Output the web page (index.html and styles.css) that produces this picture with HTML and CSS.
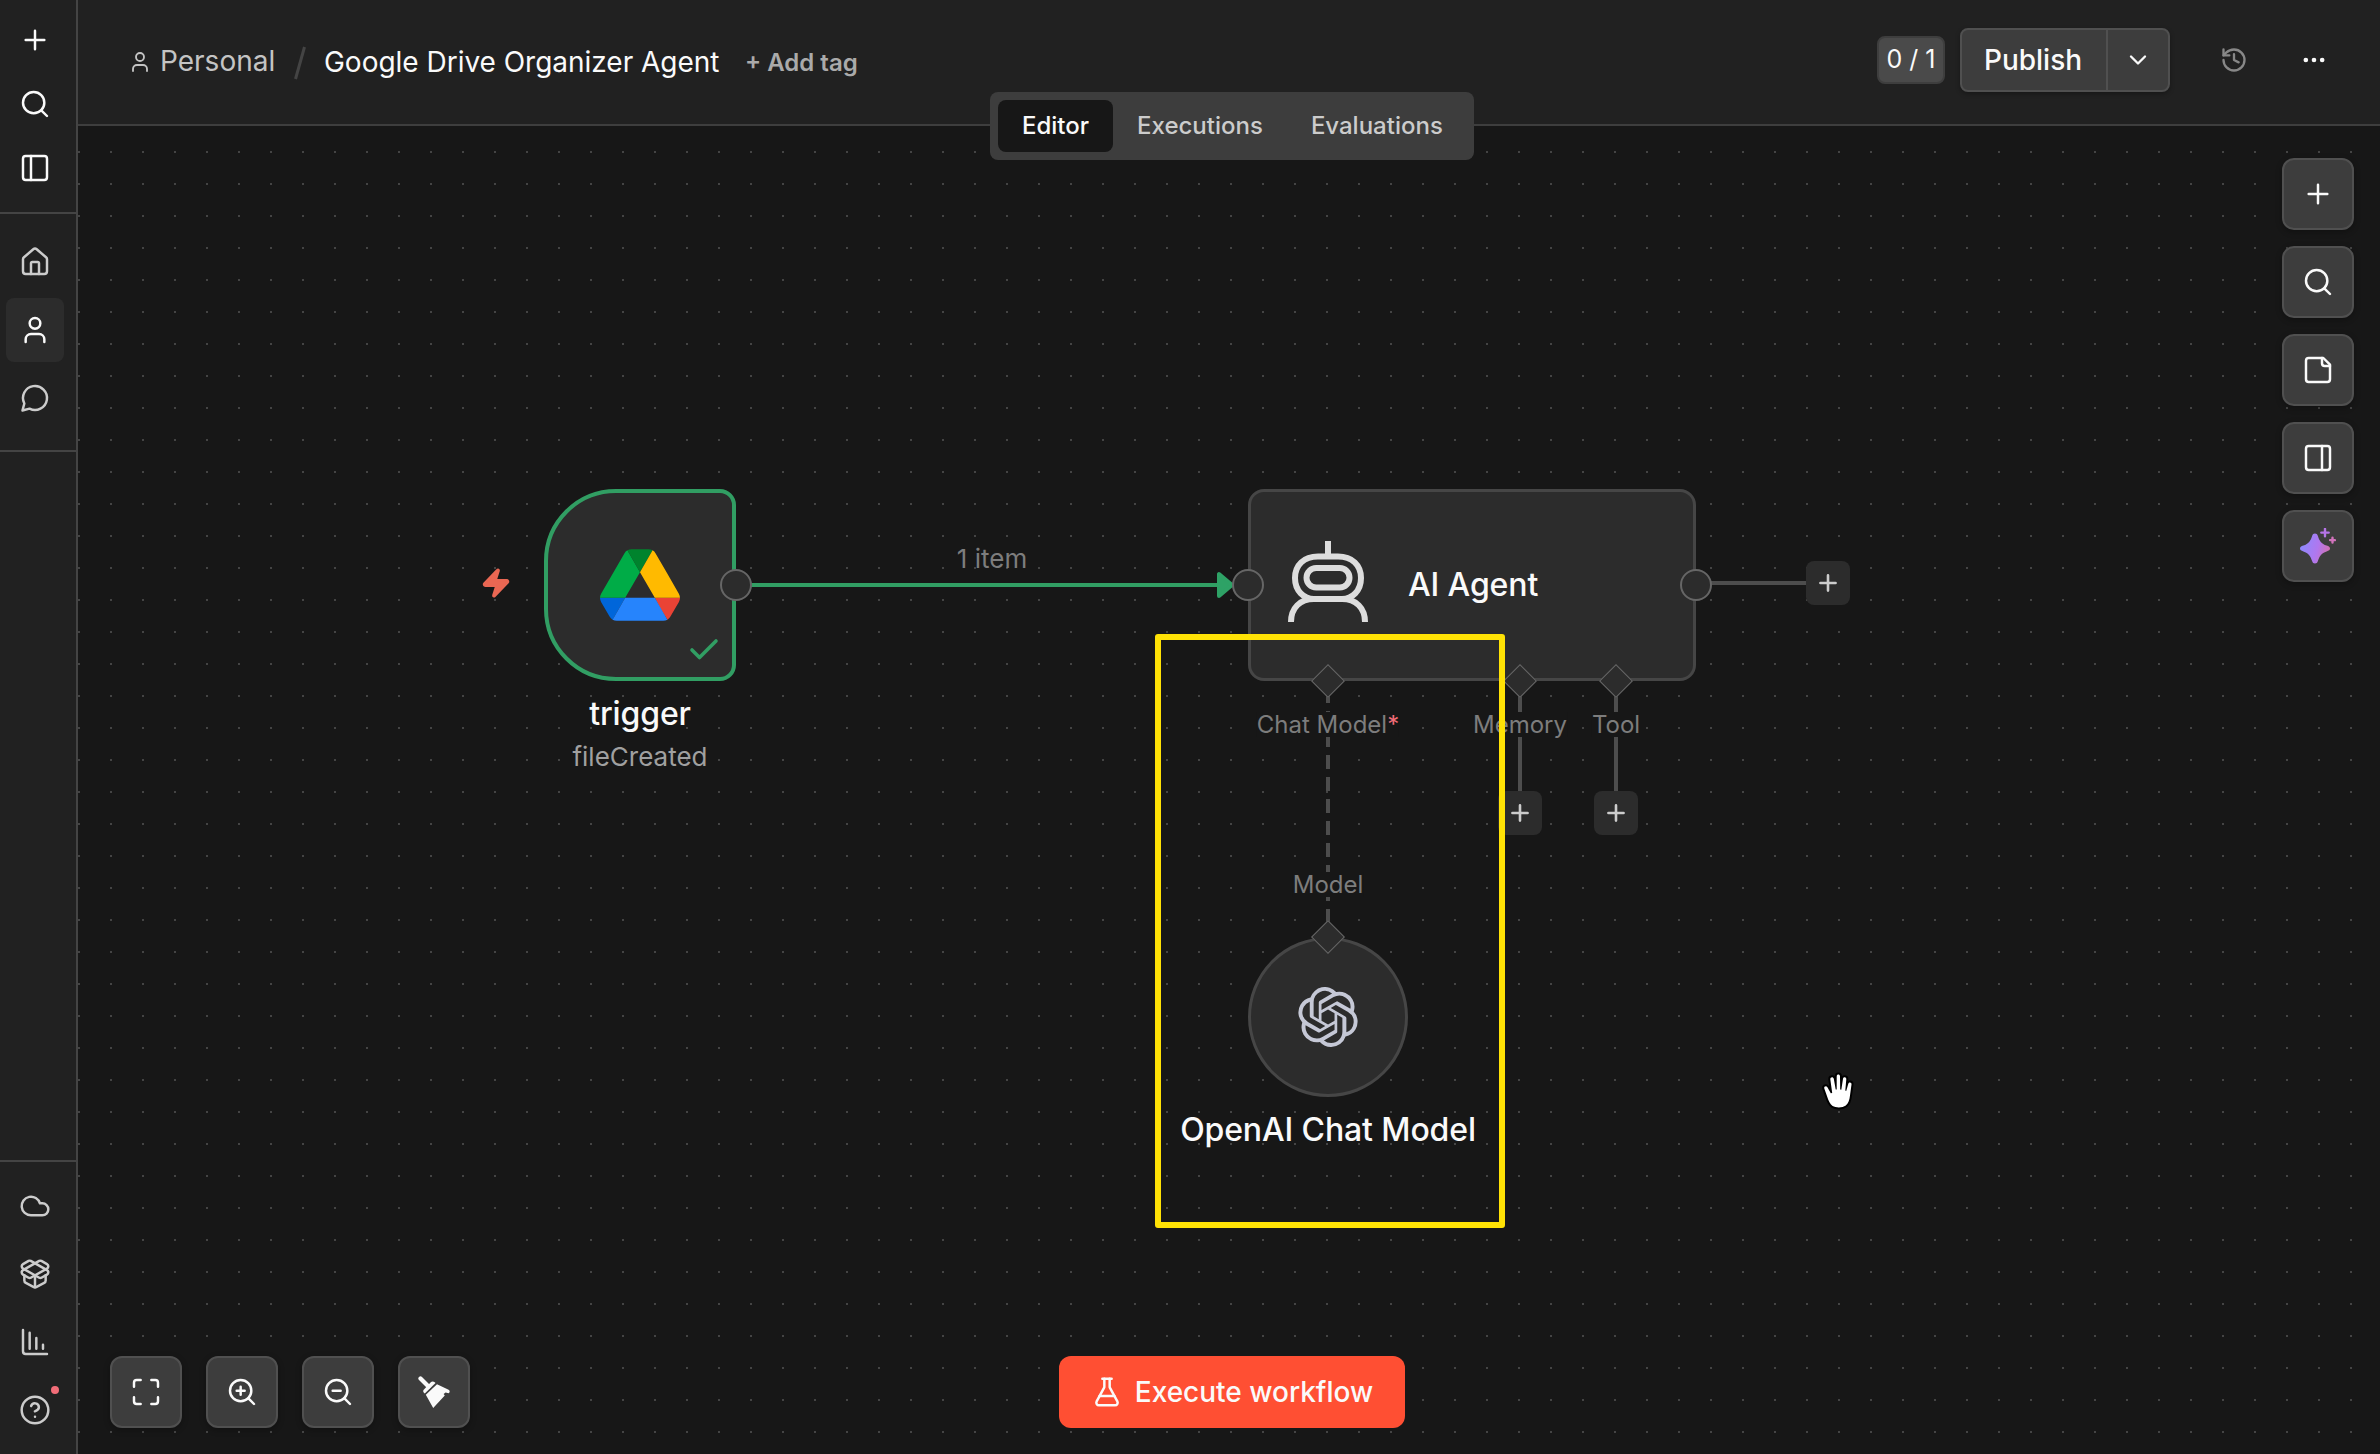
FILE: index.html
```html
<!DOCTYPE html>
<html lang="en">

<head>
    <meta charset="UTF-8">
    <meta name="viewport" content="width=device-width, initial-scale=1.0">
    <title>Google Drive Organizer Agent</title>
    <link rel="stylesheet" href="styles.css">
</head>

<body>
    <!-- Sidebar -->
    <aside class="sidebar">
        <div class="side-top">
            <a class="side-link"><svg class="icon" viewBox="0 0 24 24"><path d="M5 12h14M12 5v14"/></svg></a>
            <a class="side-link"><svg class="icon" viewBox="0 0 24 24"><circle cx="11" cy="11" r="8"/><path d="m21 21-4.3-4.3"/></svg></a>
            <a class="side-link"><svg class="icon" viewBox="0 0 24 24"><rect x="3" y="3" width="18" height="18" rx="2"/><path d="M9 3v18"/></svg></a>
        </div>
        <nav class="side-nav">
            <a class="side-item"><svg class="icon" viewBox="0 0 24 24"><path d="M15 21v-8a1 1 0 0 0-1-1h-4a1 1 0 0 0-1 1v8"/><path d="M3 10a2 2 0 0 1 .709-1.528l7-5.999a2 2 0 0 1 2.582 0l7 5.999A2 2 0 0 1 21 10v9a2 2 0 0 1-2 2H5a2 2 0 0 1-2-2z"/></svg></a>
            <a class="side-item active"><svg class="icon" viewBox="0 0 24 24"><circle cx="12" cy="7" r="4"/><path d="M19 21v-2a4 4 0 0 0-4-4H9a4 4 0 0 0-4 4v2"/></svg></a>
            <a class="side-item"><svg class="icon" viewBox="0 0 24 24"><path d="M7.9 20A9 9 0 1 0 4 16.1L2.6 21.4Z"/></svg></a>
        </nav>
        <nav class="side-bottom">
            <a class="side-item"><svg class="icon" viewBox="0 0 24 24"><path d="M17.5 19H9a7 7 0 1 1 6.71-9h1.79a4.5 4.5 0 1 1 0 9Z"/></svg></a>
            <a class="side-item"><svg class="icon" viewBox="0 0 24 24"><path d="M12 22v-9"/><path d="M15.17 2.21a1.67 1.67 0 0 1 1.63 0L21 4.57a1.93 1.93 0 0 1 0 3.36L8.82 14.79a1.655 1.655 0 0 1-1.64 0L3 12.43a1.93 1.93 0 0 1 0-3.36z"/><path d="M20 13v3.87a2.06 2.06 0 0 1-1.11 1.83l-6 3.08a1.93 1.93 0 0 1-1.78 0l-6-3.08A2.06 2.06 0 0 1 4 16.87V13"/><path d="M21 12.43a1.93 1.93 0 0 0 0-3.36L8.83 2.2a1.64 1.64 0 0 0-1.63 0L3 4.57a1.93 1.93 0 0 0 0 3.36l12.18 6.86a1.636 1.636 0 0 0 1.63 0z"/></svg></a>
            <a class="side-item"><svg class="icon" viewBox="0 0 24 24"><path d="M13 17V9M18 17v-3M3 3v16a2 2 0 0 0 2 2h16M8 17V5"/></svg></a>
            <a class="side-item"><svg class="icon" viewBox="0 0 24 24"><circle cx="12" cy="12" r="10"/><path d="M9.09 9a3 3 0 0 1 5.83 1c0 2-3 3-3 3M12 17h.01"/></svg><span class="notice"></span></a>
        </nav>
    </aside>

    <main class="main">
        <!-- Header -->
        <header class="header">
            <svg class="icon person" viewBox="0 0 24 24"><circle cx="12" cy="7" r="4"/><path d="M19 21v-2a4 4 0 0 0-4-4H9a4 4 0 0 0-4 4v2"/></svg>
            <span class="project">Personal</span>
            <svg class="slash" viewBox="0 0 14 38"><path d="M11.500 3 2.500 35"/></svg>
            <span class="workflow-name">Google Drive Organizer Agent</span>
            <span class="add-tag">+ Add tag</span>

            <div class="header-right">
                <span class="counter">0 / 1</span>
                <div class="publish">
                    <button class="publish-main">Publish</button>
                    <button class="publish-more"><svg class="icon" viewBox="0 0 24 24"><path d="m6 9 6 6 6-6"/></svg></button>
                </div>
                <svg class="icon history" viewBox="0 0 24 24"><path d="M3 12a9 9 0 1 0 9-9 9.750 9.750 0 0 0-6.740 2.740L3 8"/><path d="M3 3v5h5M12 7v5l4 2"/></svg>
                <svg class="icon more" viewBox="0 0 24 24"><circle cx="5" cy="12" r="1"/><circle cx="12" cy="12" r="1"/><circle cx="19" cy="12" r="1"/></svg>
            </div>

            <!-- Tabs lie over the header border -->
            <div class="tabs">
                <a class="tab selected">Editor</a>
                <a class="tab">Executions</a>
                <a class="tab">Evaluations</a>
            </div>
        </header>

        <!-- Canvas -->
        <section class="canvas">
            <!-- Connections between the nodes -->
            <svg class="edges" viewBox="78 126 2302 1328">
                <path class="edge done" d="M736 585H1220"/>
                <path class="arrow" d="M1219 574v22l13-11z"/>
                <path class="edge" d="M1696 583H1808"/>
                <path class="edge" d="M1520 690V795M1616 690V795"/>
                <path class="edge dashed" d="M1328 689V937"/>
            </svg>

            <span class="edge-label" id="items">1 item</span>

            <svg class="icon bolt" viewBox="0 0 24 24"><path d="M4 14a1 1 0 0 1-.78-1.630l9.900-10.200a.5.5 0 0 1 .86.46l-1.920 6.020A1 1 0 0 0 13 10h7a1 1 0 0 1 .78 1.630l-9.900 10.200a.5.5 0 0 1-.86-.46l1.920-6.020A1 1 0 0 0 11 14z"/></svg>

            <!-- Trigger node -->
            <div class="node" id="trigger">
                <div class="node-box">
                    <svg class="drive" viewBox="0 0 87.3 78">
                        <path fill="#0066da" d="m6.600 66.850 3.850 6.650c.8 1.400 1.950 2.500 3.300 3.300l13.750-23.800h-27.500c0 1.550.4 3.100 1.200 4.500z"/>
                        <path fill="#00ac47" d="m43.650 25-13.750-23.800c-1.350.8-2.500 1.900-3.300 3.300l-25.400 44a9.060 9.060 0 0 0-1.200 4.500h27.500z"/>
                        <path fill="#ea4335" d="m73.550 76.800c1.350-.8 2.500-1.900 3.300-3.300l1.600-2.750 7.650-13.250c.8-1.400 1.200-2.950 1.200-4.500h-27.502l5.852 11.500z"/>
                        <path fill="#00832d" d="m43.650 25 13.750-23.800c-1.350-.8-2.900-1.200-4.500-1.200h-18.500c-1.600 0-3.150.45-4.500 1.200z"/>
                        <path fill="#2684fc" d="m59.800 53h-32.300l-13.750 23.800c1.350.8 2.900 1.200 4.500 1.200h50.800c1.600 0 3.150-.45 4.500-1.200z"/>
                        <path fill="#ffba00" d="m73.400 26.500-12.700-22c-.8-1.400-1.950-2.500-3.300-3.300l-13.750 23.800 16.150 28h27.450c0-1.550-.4-3.100-1.200-4.500z"/>
                    </svg>
                    <svg class="icon check" viewBox="0 0 24 24"><path d="M20 6 9 17l-5-5"/></svg>
                </div>
                <div class="node-name">trigger</div>
                <div class="node-sub">fileCreated</div>
            </div>

            <!-- Agent node -->
            <div class="node" id="agent">
                <svg class="robot" viewBox="0 0 80 81">
                    <path d="M40 0v15"/>
                    <path d="M30 15.500H50C64 15.500 73 24 73 37S64 58 54 58H26C16 58 7 50 7 37S16 15.500 30 15.500Z"/>
                    <rect x="18.500" y="27" width="43" height="19.500" rx="9.700"/>
                    <path d="M3 81C3 67 12 58 26 58H54C68 58 77 67 77 81"/>
                </svg>
                <div class="node-name">AI Agent</div>
            </div>

            <!-- Chat model node -->
            <div class="node" id="model">
                <div class="node-box">
                    <svg class="openai" viewBox="0 0 24 24"><path d="M22.2819 9.8211a5.9847 5.9847 0 0 0-.5157-4.9108 6.0462 6.0462 0 0 0-6.5098-2.9A6.0651 6.0651 0 0 0 4.9807 4.1818a5.9847 5.9847 0 0 0-3.9977 2.9 6.0462 6.0462 0 0 0 .7427 7.0966 5.98 5.98 0 0 0 .511 4.9107 6.051 6.051 0 0 0 6.5146 2.9001A5.9847 5.9847 0 0 0 13.2599 24a6.0557 6.0557 0 0 0 5.7718-4.2058 5.9894 5.9894 0 0 0 3.9977-2.9001 6.0557 6.0557 0 0 0-.7475-7.0729zm-9.022 12.6081a4.4755 4.4755 0 0 1-2.8764-1.0408l.1419-.0804 4.7783-2.7582a.7948.7948 0 0 0 .3927-.6813v-6.7369l2.02 1.1686a.071.071 0 0 1 .038.052v5.5826a4.504 4.504 0 0 1-4.4945 4.4944zm-9.6607-4.1254a4.4708 4.4708 0 0 1-.5346-3.0137l.142.0852 4.783 2.7582a.7712.7712 0 0 0 .7806 0l5.8428-3.3685v2.3324a.0804.0804 0 0 1-.0332.0615L9.74 19.9502a4.4992 4.4992 0 0 1-6.1408-1.6464zM2.3408 7.8956a4.485 4.485 0 0 1 2.3655-1.9728V11.6a.7664.7664 0 0 0 .3879.6765l5.8144 3.3543-2.0201 1.1685a.0757.0757 0 0 1-.071 0l-4.8303-2.7865A4.504 4.504 0 0 1 2.3408 7.872zm16.5963 3.8558L13.1038 8.364 15.1192 7.2a.0757.0757 0 0 1 .071 0l4.8303 2.7913a4.4944 4.4944 0 0 1-.6765 8.1042v-5.6772a.79.79 0 0 0-.407-.667zm2.0107-3.0231l-.142-.0852-4.7735-2.7818a.7759.7759 0 0 0-.7854 0L9.409 9.2297V6.8974a.0662.0662 0 0 1 .0284-.0615l4.8303-2.7866a4.4992 4.4992 0 0 1 6.6802 4.66zM8.3065 12.863l-2.02-1.1638a.0804.0804 0 0 1-.038-.0567V6.0742a4.4992 4.4992 0 0 1 7.3757-3.4537l-.142.0805L8.704 5.459a.7948.7948 0 0 0-.3927.6813zm1.0976-2.3654l2.602-1.4998 2.6069 1.4998v2.9994l-2.5974 1.4997-2.6067-1.4997Z"/></svg>
                </div>
                <div class="node-name">OpenAI Chat Model</div>
            </div>

            <!-- Connection points -->
            <span class="port" id="port-trigger"></span>
            <span class="port" id="port-agent-in"></span>
            <span class="port" id="port-agent-out"></span>
            <span class="diamond" id="diamond-chat"></span>
            <span class="diamond" id="diamond-memory"></span>
            <span class="diamond" id="diamond-tool"></span>
            <span class="diamond" id="diamond-model"></span>
            <span class="port-label" id="label-chat">Chat Model<b>*</b></span>
            <span class="port-label" id="label-memory">Memory</span>
            <span class="port-label" id="label-tool">Tool</span>
            <span class="port-label" id="label-model">Model</span>
            <span class="plus" id="plus-out"><svg class="icon" viewBox="0 0 24 24"><path d="M5 12h14M12 5v14"/></svg></span>
            <span class="plus" id="plus-memory"><svg class="icon" viewBox="0 0 24 24"><path d="M5 12h14M12 5v14"/></svg></span>
            <span class="plus" id="plus-tool"><svg class="icon" viewBox="0 0 24 24"><path d="M5 12h14M12 5v14"/></svg></span>

            <!-- Highlight around the chat model -->
            <div class="highlight"></div>

            <!-- Right toolbar -->
            <div class="toolbar">
                <button class="tool"><svg class="icon" viewBox="0 0 24 24"><path d="M5 12h14M12 5v14"/></svg></button>
                <button class="tool"><svg class="icon" viewBox="0 0 24 24"><circle cx="11" cy="11" r="8"/><path d="m21 21-4.3-4.3"/></svg></button>
                <button class="tool"><svg class="icon" viewBox="0 0 24 24"><path d="M16 3H5a2 2 0 0 0-2 2v14a2 2 0 0 0 2 2h14a2 2 0 0 0 2-2V8Z"/><path d="M15 3v4a2 2 0 0 0 2 2h4"/></svg></button>
                <button class="tool"><svg class="icon" viewBox="0 0 24 24"><rect x="3" y="3" width="18" height="18" rx="2"/><path d="M15 3v18"/></svg></button>
                <button class="tool">
                    <svg class="sparkle" viewBox="0 0 36 36">
                        <defs>
                            <linearGradient id="ai" gradientUnits="userSpaceOnUse" x1="0" y1="14" x2="36" y2="24">
                                <stop offset="0" stop-color="#8b8bff"/>
                                <stop offset=".5" stop-color="#b077ee"/>
                                <stop offset=".95" stop-color="#e0709a"/>
                            </linearGradient>
                        </defs>
                        <path fill="url(#ai)" d="M15 5.500c1.500 0 2.300.8 2.800 2.200 1.500 4.900 3.600 8.300 8.800 9.900 2.300.7 3.400 1.400 3.400 2.900s-1.100 2.200-3.400 2.900c-5.200 1.600-7.300 5-8.800 9.900-.5 1.400-1.300 2.200-2.800 2.200s-2.300-.8-2.800-2.200c-1.500-4.900-3.600-8.300-8.800-9.900C1.100 22.700 0 22 0 20.500s1.100-2.200 3.400-2.900c5.200-1.600 7.300-5 8.800-9.900.5-1.400 1.300-2.200 2.800-2.200Z"/>
                        <path stroke="#b574e6" stroke-width="2.400" stroke-linecap="round" d="M25 .9v7.400M21.300 4.600h7.400"/>
                        <path stroke="#d273bc" stroke-width="2.400" stroke-linecap="round" d="M32.500 9.700v4.800M30.100 12.100h4.800"/>
                    </svg>
                </button>
            </div>

            <!-- Zoom controls -->
            <div class="controls">
                <button class="tool"><svg class="icon" viewBox="0 0 24 24"><path d="M8 3H5a2 2 0 0 0-2 2v3M21 8V5a2 2 0 0 0-2-2h-3M3 16v3a2 2 0 0 0 2 2h3M16 21h3a2 2 0 0 0 2-2v-3"/></svg></button>
                <button class="tool"><svg class="icon" viewBox="0 0 24 24"><circle cx="11" cy="11" r="8"/><path d="m21 21-4.350-4.350M11 8v6M8 11h6"/></svg></button>
                <button class="tool"><svg class="icon" viewBox="0 0 24 24"><circle cx="11" cy="11" r="8"/><path d="m21 21-4.350-4.350M8 11h6"/></svg></button>
                <button class="tool">
                    <svg class="broom" viewBox="0 0 32 32">
                        <path stroke="#fafafa" stroke-width="4.200" stroke-linecap="round" d="m2.500 2.500 8 8"/>
                        <path fill="#fafafa" d="M5.500 14 12.500 6.400c1.300-1.200 3-1.200 4.200-.2l.8.8L6.800 17.600c-1.500-1-2-2.400-1.300-3.600Z"/>
                        <path fill="#fafafa" d="M19 8.200 30.600 13.800c1.500 1 1.400 2.600 0 3.400l-3-.6-2 1.400 1.200 1.400L15.200 32 7.800 18.700Z"/>
                    </svg>
                </button>
            </div>

            <button class="execute">
                <svg class="icon" viewBox="0 0 24 24"><path d="M14 2v6a2 2 0 0 0 .245.96l5.510 10.080A2 2 0 0 1 18 22H6a2 2 0 0 1-1.755-2.960l5.510-10.080A2 2 0 0 0 10 8V2"/><path d="M6.453 15h11.094M8.500 2h7"/></svg>
                Execute workflow
            </button>

            <!-- Mouse pointer -->
            <svg class="hand" viewBox="0 0 32 38">
                <path d="M10.600 34C8 32 6.300 28 5.300 25L2.300 16.500C1.600 14.500 4.300 13.400 5.400 15.300L8.800 21.300 10.200 21 8.300 7.300C8.100 4.800 11.300 4.300 11.800 6.800L13.700 17.600 14.700 17.600 14.700 4.500C14.700 1.900 18 1.900 18 4.500L18.200 17.600 19.300 17.700 21 6.800C21.500 4.500 24.600 4.900 24.300 7.300L23.300 18.600 24.200 18.900 26.300 11.800C27 9.600 29.900 10.300 29.500 12.600L28 23.500C27.500 28 26.300 31.500 23.800 33.500 20.500 36 14 36 10.600 34Z"/>
            </svg>
        </section>
    </main>
</body>

</html>
```

FILE: styles.css
```css
/* Set the style of the entire page */
* {
    box-sizing: border-box;
}

body {
    margin: 0;
    display: flex;
    width: 2380px;
    height: 1454px;
    overflow: hidden;
    background-color: #171717;
    color: #fafafa;
    font-family: Inter, "Liberation Sans", sans-serif;
    font-size: 24px;
}

button {
    padding: 0;
    border: none;
    background: none;
    color: inherit;
    font: inherit;
}

/* Line icons */
.icon {
    display: block;
    flex: none;
    width: 32px;
    height: 32px;
    fill: none;
    stroke: currentColor;
    stroke-width: 1.85;
    stroke-linecap: round;
    stroke-linejoin: round;
}

/* Sidebar */
.sidebar {
    display: flex;
    flex-direction: column;
    flex: none;
    width: 78px;
    background-color: #212121;
    border-right: 2px solid #444444;
}

.side-top {
    display: flex;
    flex-direction: column;
    gap: 32px;
    height: 214px;
    padding: 24px 19px 0;
    border-bottom: 2px solid #444444;
}

.side-nav,
.side-bottom {
    display: flex;
    flex-direction: column;
    gap: 4px;
    padding: 16px 6px 0;
    color: #cccccc;
}

.side-nav {
    height: 238px;
    border-bottom: 2px solid #444444;
}

.side-bottom {
    margin-top: auto;
    height: 294px;
    padding-top: 12px;
    border-top: 2px solid #444444;
}

.side-item {
    position: relative;
    display: flex;
    align-items: center;
    justify-content: center;
    width: 58px;
    height: 64px;
    border-radius: 8px;
}

.side-item.active {
    background-color: #2c2c2c;
    color: #fafafa;
}

.notice {
    position: absolute;
    top: 8px;
    right: 5px;
    width: 8px;
    height: 8px;
    border-radius: 50%;
    background-color: #f26d78;
}

.main {
    flex: 1;
    display: flex;
    flex-direction: column;
}

/* Header */
.header {
    position: relative;
    z-index: 1;
    display: flex;
    align-items: center;
    height: 126px;
    padding: 0 50px;
    padding-bottom: 4px;
    background-color: #212121;
    border-bottom: 2px solid #3e3e3e;
    font-size: 28px;
    white-space: nowrap;
}

.person {
    width: 24px;
    height: 24px;
    margin-top: 4px;
    color: #c4c4c4;
}

.project {
    width: 113px;
    margin-top: 1px;
    margin-left: 8px;
    color: #c4c4c4;
}

.slash {
    width: 14px;
    height: 38px;
    margin: 6px 17px 0 20px;
    fill: none;
    stroke: #444444;
    stroke-width: 3;
}

.workflow-name {
    width: 396px;
    margin-top: 4px;
    letter-spacing: -0.02px;
}

.add-tag {
    margin: 4px 0 0 25px;
    color: #aaaaaa;
    font-size: 24px;
    font-weight: 600;
}

.header-right {
    display: flex;
    align-items: center;
    margin-left: auto;
}

.counter {
    width: 68px;
    height: 48px;
    margin-right: 15px;
    border: 2px solid #3e3e3e;
    border-radius: 8px;
    background-color: #4a4a4a;
    font-size: 25px;
    line-height: 43px;
    text-align: center;
}

.publish {
    display: flex;
    width: 210px;
    height: 64px;
    margin-right: 50px;
    border: 2px solid #505050;
    border-radius: 8px;
    background-color: #3d3d3d;
    box-shadow: 0 2px 5px rgba(0, 0, 0, 0.3);
}

.publish-main {
    width: 146px;
    padding-right: 2px;
    border-right: 2px solid #505050;
    font-weight: 500;
}

.publish-more {
    display: flex;
    align-items: center;
    justify-content: center;
    flex: 1;
}

.publish-more .icon,
.history,
.more {
    width: 28px;
    height: 28px;
    stroke-width: 2;
}

.history {
    color: #888888;
    margin-right: 52px;
}

.more {
    margin-right: 2px;
    fill: currentColor;
}

/* Tabs */
.tabs {
    position: absolute;
    top: 92px;
    left: 912px;
    display: flex;
    width: 484px;
    height: 68px;
    padding: 8px;
    border-radius: 8px;
    background-color: #3d3d3d;
}

.tab {
    padding: 0 24px;
    border-radius: 8px;
    color: #cccccc;
    font-size: 24px;
    font-weight: 500;
    line-height: 52px;
}

.tab.selected {
    background-color: #171717;
    color: #fafafa;
}

/* Canvas with a dotted grid */
.canvas {
    position: relative;
    flex: 1;
    background-color: #171717;
    background-image: linear-gradient(#171717 30px, transparent 30px), linear-gradient(90deg, #444444 2px, transparent 2px);
    background-size: 32px 32px;
    background-position: 0 -5px;
}

.edges {
    position: absolute;
    top: 0;
    left: 0;
    width: 2302px;
    height: 1328px;
}

.edge {
    fill: none;
    stroke: #4d4d4d;
    stroke-width: 4;
}

.edge.done {
    stroke: #319e63;
}

.edge.dashed {
    stroke-dasharray: 14 8;
}

.arrow {
    fill: #2ea266;
    stroke: #2ea266;
    stroke-width: 4;
    stroke-linejoin: round;
}

.edge-label {
    position: absolute;
    top: 417px;
    left: 814px;
    width: 200px;
    color: #7d7d7d;
    font-size: 26px;
    line-height: 32px;
    text-align: center;
}

.bolt {
    position: absolute;
    top: 441px;
    left: 402px;
    color: #ea6753;
    fill: #ea6753;
}

/* Nodes */
.node {
    position: absolute;
    display: flex;
    flex-direction: column;
    align-items: center;
    white-space: nowrap;
}

.node-box {
    position: relative;
    display: flex;
    align-items: center;
    justify-content: center;
    background-color: #2c2c2c;
}

.node-name {
    font-size: 32px;
    font-weight: 500;
    line-height: 40px;
    letter-spacing: -0.12px;
}

.node-sub {
    margin-top: 5px;
    color: #a0a0a0;
    font-size: 26px;
    line-height: 36px;
}

#trigger {
    top: 363px;
    left: 466px;
    width: 192px;
}

#trigger .node-box {
    width: 192px;
    height: 192px;
    margin-bottom: 13px;
    border: 4px solid #319e63;
    border-radius: 72px 16px 16px 72px;
}

.drive {
    width: 80px;
    height: 72px;
}

.check {
    position: absolute;
    right: 10px;
    bottom: 9px;
    width: 36px;
    height: 36px;
    color: #319e63;
    stroke-width: 2.4;
}

#agent {
    flex-direction: row;
    top: 363px;
    left: 1170px;
    width: 448px;
    height: 192px;
    padding-left: 37px;
    border: 3px solid #464646;
    border-radius: 16px;
    background-color: #2c2c2c;
}

.robot {
    width: 80px;
    height: 81px;
    margin-right: 40px;
    margin-top: -8px;
    fill: none;
    stroke: #dddddd;
    stroke-width: 6;
}

#model {
    top: 811px;
    left: 1100px;
    width: 300px;
}

#model .node-box {
    width: 160px;
    height: 160px;
    margin-bottom: 13px;
    border: 3px solid #464646;
    border-radius: 50%;
}

.openai {
    width: 60px;
    height: 60px;
    fill: #c5c8d6;
}

/* Connection points */
.port {
    position: absolute;
    width: 32px;
    height: 32px;
    border: 2px solid #666666;
    border-radius: 50%;
    background-color: #2c2c2c;
}

#port-trigger {
    top: 443px;
    left: 642px;
}

#port-agent-in {
    top: 443px;
    left: 1154px;
}

#port-agent-out {
    top: 443px;
    left: 1602px;
}

.diamond {
    position: absolute;
    top: 543px;
    width: 24px;
    height: 24px;
    border: 1.5px solid #666666;
    background-color: #2c2c2c;
    transform: rotate(45deg);
}

#diamond-chat {
    left: 1238px;
}

#diamond-memory {
    left: 1430px;
}

#diamond-tool {
    left: 1526px;
}

#diamond-model {
    top: 799px;
    left: 1238px;
}

.port-label {
    position: absolute;
    top: 586px;
    color: #7d7d7d;
    background-color: #171717;
    font-size: 24px;
    line-height: 25px;
    white-space: nowrap;
    transform: translateX(-50%);
}

.port-label b {
    color: #f26d78;
    font-weight: 400;
}

#label-chat {
    left: 1250px;
}

#label-memory {
    left: 1442px;
}

#label-tool {
    left: 1538px;
}

#label-model {
    top: 746px;
    left: 1250px;
}

.plus {
    position: absolute;
    display: flex;
    align-items: center;
    justify-content: center;
    width: 44px;
    height: 44px;
    border-radius: 8px;
    background-color: #2c2c2c;
    color: #cccccc;
}

.plus .icon {
    width: 26px;
    height: 26px;
    stroke-width: 2.4;
}

#plus-out {
    top: 435px;
    left: 1728px;
}

#plus-memory {
    top: 665px;
    left: 1420px;
}

#plus-tool {
    top: 665px;
    left: 1516px;
}

.highlight {
    position: absolute;
    top: 508px;
    left: 1077px;
    width: 350px;
    height: 594px;
    border: 6px solid #ffe205;
    border-radius: 3px;
}

/* Floating buttons */
.toolbar {
    position: absolute;
    top: 32px;
    right: 26px;
    display: flex;
    flex-direction: column;
    gap: 16px;
}

.controls {
    position: absolute;
    left: 32px;
    bottom: 26px;
    display: flex;
    gap: 24px;
}

.tool {
    display: flex;
    align-items: center;
    justify-content: center;
    width: 72px;
    height: 72px;
    border: 2px solid #505050;
    border-radius: 12px;
    background-color: #3d3d3d;
    box-shadow: 0 2px 6px rgba(0, 0, 0, 0.3);
}

.sparkle {
    width: 36px;
    height: 36px;
}

.broom {
    width: 32px;
    height: 32px;
}

.execute {
    position: absolute;
    left: 981px;
    bottom: 26px;
    display: flex;
    align-items: center;
    justify-content: center;
    gap: 12px;
    width: 346px;
    height: 72px;
    border-radius: 12px;
    background-color: #ff4f33;
    font-size: 28px;
    font-weight: 500;
    white-space: nowrap;
}

.hand {
    position: absolute;
    top: 946px;
    left: 1744px;
    width: 32px;
    height: 38px;
    overflow: visible;
    fill: #ffffff;
    stroke: #000000;
    stroke-width: 4;
    stroke-linejoin: round;
    paint-order: stroke;
}
```
